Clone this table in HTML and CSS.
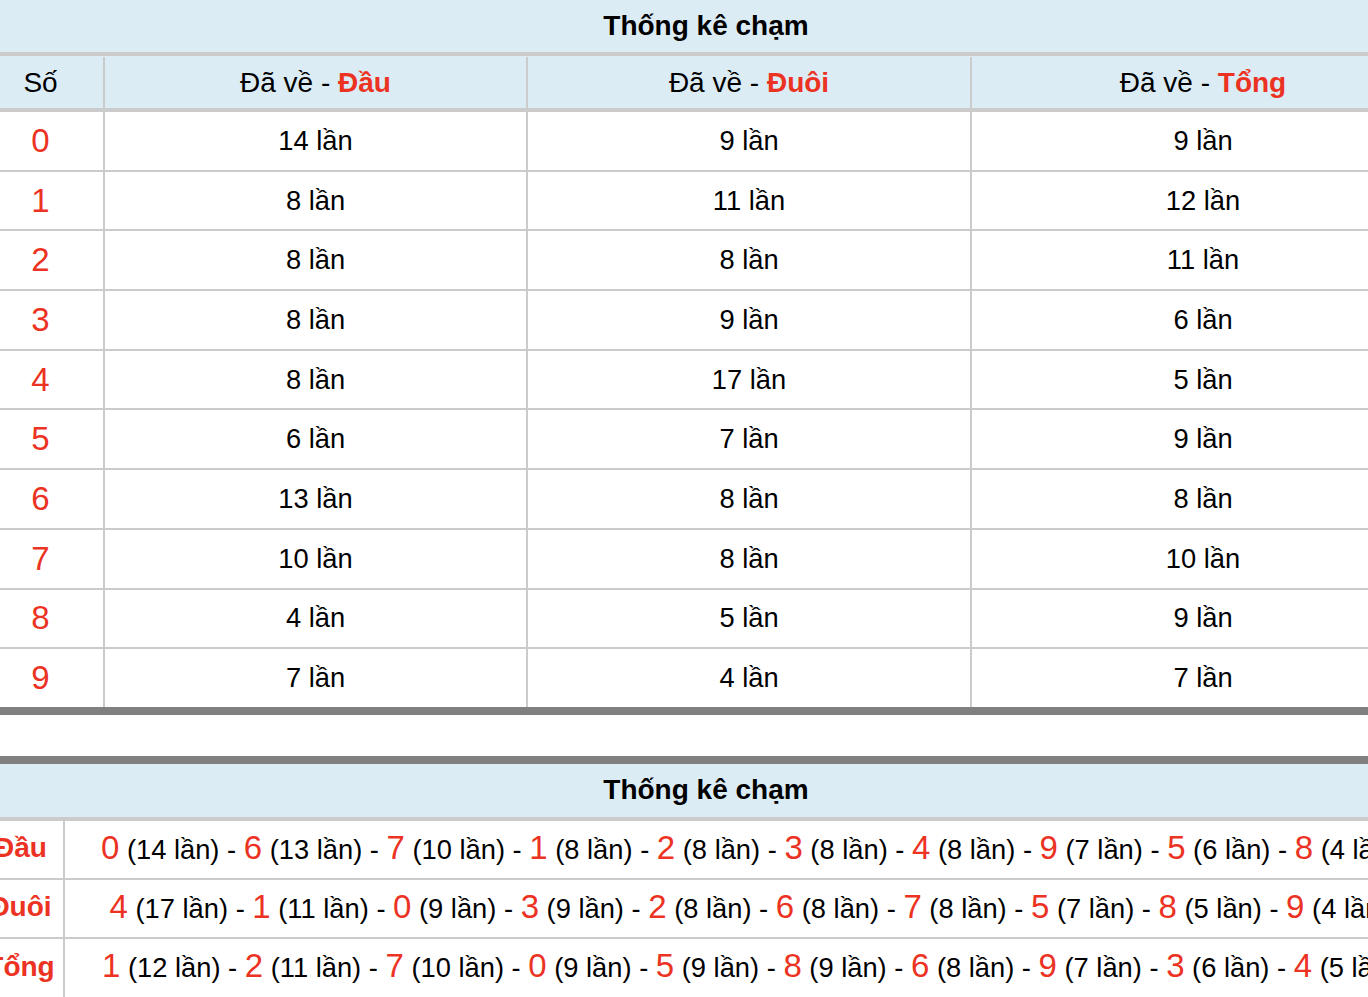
FILE: index.html
```html
<!DOCTYPE html>
<html lang="vi">
<head>
<meta charset="utf-8">
<title>Thống kê chạm</title>
<link rel="stylesheet" href="styles.css">
</head>
<body>
<div class="page">
  <section class="chart chart-main">
    <div class="caption">Thống kê chạm</div>
    <div class="row head">
      <div class="cell">Số</div>
      <div class="cell">Đã về -&nbsp;<b class="hl">Đầu</b></div>
      <div class="cell">Đã về -&nbsp;<b class="hl">Đuôi</b></div>
      <div class="cell">Đã về -&nbsp;<b class="hl">Tổng</b></div>
    </div>
    <div class="row"><div class="cell num">0</div><div class="cell">14 lần</div><div class="cell">9 lần</div><div class="cell">9 lần</div></div>
    <div class="row"><div class="cell num">1</div><div class="cell">8 lần</div><div class="cell">11 lần</div><div class="cell">12 lần</div></div>
    <div class="row"><div class="cell num">2</div><div class="cell">8 lần</div><div class="cell">8 lần</div><div class="cell">11 lần</div></div>
    <div class="row"><div class="cell num">3</div><div class="cell">8 lần</div><div class="cell">9 lần</div><div class="cell">6 lần</div></div>
    <div class="row"><div class="cell num">4</div><div class="cell">8 lần</div><div class="cell">17 lần</div><div class="cell">5 lần</div></div>
    <div class="row"><div class="cell num">5</div><div class="cell">6 lần</div><div class="cell">7 lần</div><div class="cell">9 lần</div></div>
    <div class="row"><div class="cell num">6</div><div class="cell">13 lần</div><div class="cell">8 lần</div><div class="cell">8 lần</div></div>
    <div class="row"><div class="cell num">7</div><div class="cell">10 lần</div><div class="cell">8 lần</div><div class="cell">10 lần</div></div>
    <div class="row"><div class="cell num">8</div><div class="cell">4 lần</div><div class="cell">5 lần</div><div class="cell">9 lần</div></div>
    <div class="row"><div class="cell num">9</div><div class="cell">7 lần</div><div class="cell">4 lần</div><div class="cell">7 lần</div></div>
  </section>

  <section class="chart chart-sum">
    <div class="caption">Thống kê chạm</div>
    <div class="srow">
      <div class="cell label">Đầu</div>
      <div class="cell list"><span class="d">0</span>&nbsp;(14 lần) - <span class="d">6</span>&nbsp;(13 lần) - <span class="d">7</span>&nbsp;(10 lần) - <span class="d">1</span>&nbsp;(8 lần) - <span class="d">2</span>&nbsp;(8 lần) - <span class="d">3</span>&nbsp;(8 lần) - <span class="d">4</span>&nbsp;(8 lần) - <span class="d">9</span>&nbsp;(7 lần) - <span class="d">5</span>&nbsp;(6 lần) - <span class="d">8</span>&nbsp;(4 lần)</div>
    </div>
    <div class="srow">
      <div class="cell label">Đuôi</div>
      <div class="cell list"><span class="d">4</span>&nbsp;(17 lần) - <span class="d">1</span>&nbsp;(11 lần) - <span class="d">0</span>&nbsp;(9 lần) - <span class="d">3</span>&nbsp;(9 lần) - <span class="d">2</span>&nbsp;(8 lần) - <span class="d">6</span>&nbsp;(8 lần) - <span class="d">7</span>&nbsp;(8 lần) - <span class="d">5</span>&nbsp;(7 lần) - <span class="d">8</span>&nbsp;(5 lần) - <span class="d">9</span>&nbsp;(4 lần)</div>
    </div>
    <div class="srow">
      <div class="cell label">Tổng</div>
      <div class="cell list"><span class="d">1</span>&nbsp;(12 lần) - <span class="d">2</span>&nbsp;(11 lần) - <span class="d">7</span>&nbsp;(10 lần) - <span class="d">0</span>&nbsp;(9 lần) - <span class="d">5</span>&nbsp;(9 lần) - <span class="d">8</span>&nbsp;(9 lần) - <span class="d">6</span>&nbsp;(8 lần) - <span class="d">9</span>&nbsp;(7 lần) - <span class="d">3</span>&nbsp;(6 lần) - <span class="d">4</span>&nbsp;(5 lần)</div>
    </div>
  </section>
</div>
</body>
</html>
```

FILE: styles.css
```css
html, body {
  margin: 0;
  padding: 0;
  background: #fff;
  overflow: hidden;
}

body {
  font-family: "Liberation Sans", Arial, Helvetica, sans-serif;
  color: #000;
}

.page {
  width: 1456px;
  margin-left: -22px;
}

.chart {
  border-bottom: 8px solid #808080;
}

.caption {
  height: 56px;
  box-sizing: border-box;
  background: #dcecf5;
  border-bottom: 4px solid #cbcbcb;
  display: flex;
  align-items: center;
  justify-content: center;
  font-weight: bold;
  font-size: 28px;
}

.row {
  display: grid;
  grid-template-columns: 127px 423px 444px 462px;
  height: 59.7px;
  box-sizing: border-box;
  border-bottom: 2px solid #cbcbcb;
  font-size: 27.3px;
}

.row:last-child {
  height: 57.7px;
  border-bottom: 0;
}

.row.head {
  height: 56px;
  padding-top: 1px;
  border-bottom: 4px solid #cbcbcb;
  background: #dcecf5;
  font-size: 28px;
}

.cell {
  display: flex;
  align-items: center;
  justify-content: center;
  box-sizing: border-box;
  border-right: 2px solid #cbcbcb;
  white-space: nowrap;
}

.cell:last-child {
  border-right: 0;
}

.hl {
  color: #ec3323;
  font-weight: bold;
}

.num {
  color: #ec3323;
  font-size: 33px;
}

.chart-sum {
  margin-top: 41px;
  border-top: 8px solid #808080;
}

.chart-sum .caption {
  height: 57px;
}

.srow {
  display: grid;
  grid-template-columns: 87px 1369px;
  height: 59.3px;
  box-sizing: border-box;
  border-bottom: 2px solid #cbcbcb;
  font-size: 27.3px;
}

.label {
  color: #ec3323;
  font-weight: bold;
  font-size: 28px;
  padding-bottom: 3px;
}

.list {
  display: block;
  text-align: center;
  line-height: 54px;
}

.d {
  color: #ec3323;
  font-size: 33px;
}
```
